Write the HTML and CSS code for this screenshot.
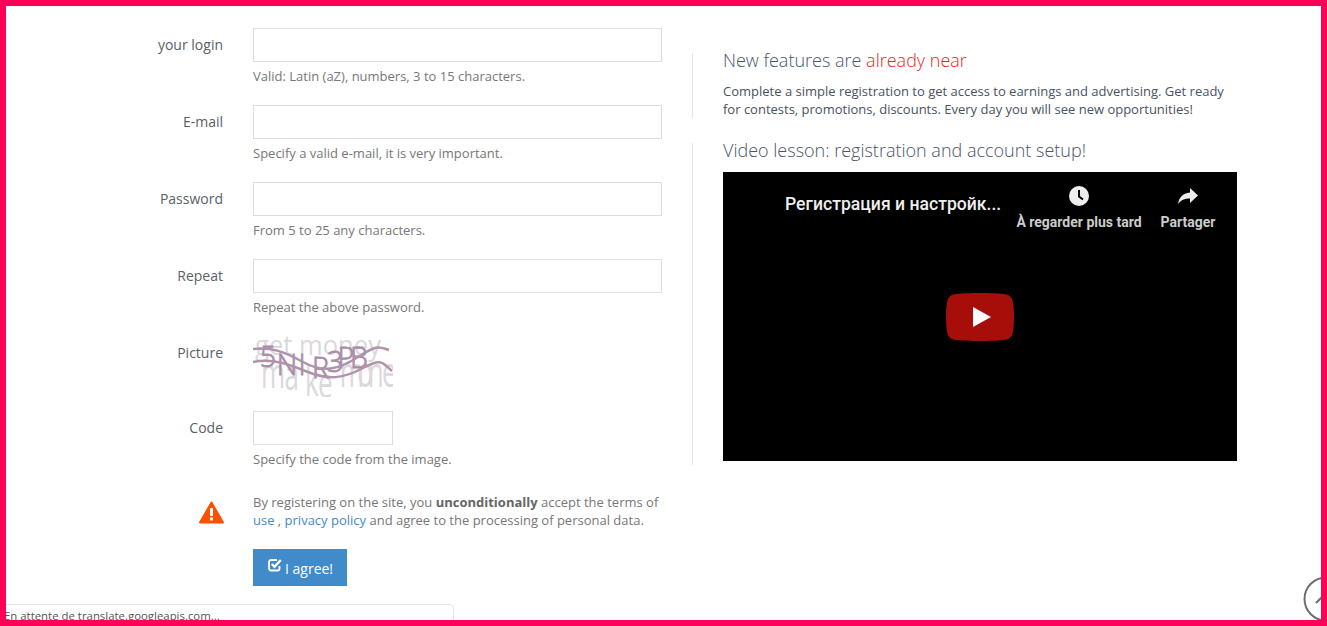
FILE: index.html
```html
<!DOCTYPE html>
<html lang="en">
<head>
<meta charset="utf-8">
<title>Registration</title>
<link rel="stylesheet" href="styles.css">
</head>
<body>
<main class="page">
  <form class="form">
    <div class="row"><label class="label">your login</label><div class="field"><input class="input" type="text"><p class="hint">Valid: Latin (aZ), numbers, 3 to 15 characters.</p></div></div>
    <div class="row"><label class="label">E-mail</label><div class="field"><input class="input" type="text"><p class="hint">Specify a valid e-mail, it is very important.</p></div></div>
    <div class="row"><label class="label">Password</label><div class="field"><input class="input" type="text"><p class="hint">From 5 to 25 any characters.</p></div></div>
    <div class="row"><label class="label">Repeat</label><div class="field"><input class="input" type="text"><p class="hint">Repeat the above password.</p></div></div>
    <div class="row row-captcha"><label class="label">Picture</label><div class="field">
      <svg class="captcha" width="140" height="62" viewBox="0 0 140 62">
        <text class="cap-bg" x="2" y="20" textLength="126" lengthAdjust="spacingAndGlyphs">get money</text>
        <text class="cap-bg cap-big" transform="scale(.62 1)" x="13 51 84 105 120 140 168 185 208" y="53 55 61 63 56 52 52 52 52">make mone</text>
        <text class="cap-fg" transform="scale(.95 1)" x="7 25 48 62 78 89 102" y="32 40 40 43 37 33 33">5NIR3PB</text>
        <path class="cap-line" d="M0 14C18 12 30 16 50 27S85 35 105 22 126 12 136 15"/>
        <path class="cap-line" d="M0 27C20 23 35 29 55 37S90 44 110 33 130 29 139 36"/>
      </svg>
    </div></div>
    <div class="row row-code"><label class="label">Code</label><div class="field"><input class="input input-code" type="text"><p class="hint">Specify the code from the image.</p></div></div>
    <div class="row row-terms">
      <div class="warn"><svg width="25" height="23" viewBox="0 0 25 23"><path d="M12.5 1.5 1 21.5h23z" fill="#ff4f00" stroke="#ff4f00" stroke-width="2" stroke-linejoin="round"/><rect x="11" y="7" width="3" height="8" fill="#fff"/><rect x="11" y="16.500" width="3" height="3" fill="#fff"/></svg></div>
      <div class="field">
        <p class="terms">By registering on the site, you <b>unconditionally</b> accept the terms of <a href="#">use</a> , <a href="#">privacy policy</a> and agree to the processing of personal data.</p>
        <button class="btn" type="button"><svg width="14" height="14" viewBox="0 0 14 14"><path d="M11.500 8v2.500a2 2 0 0 1-2 2H3a2 2 0 0 1-2-2V4a2 2 0 0 1 2-2h6" fill="none" stroke="#fff" stroke-width="1.800"/><path d="M3.800 6 6.500 8.800 12.800 2" fill="none" stroke="#fff" stroke-width="2.400"/></svg> I agree!</button>
      </div>
    </div>
  </form>
  <aside class="side">
    <section class="block block-news">
      <h2 class="title">New features are <span class="accent">already near</span></h2>
      <p class="text">Complete a simple registration to get access to earnings and advertising. Get ready for contests, promotions, discounts. Every day you will see new opportunities!</p>
    </section>
    <section class="block block-video">
      <h2 class="title">Video lesson: registration and account setup!</h2>
      <div class="video">
        <div class="video-top">
          <span class="video-title">Регистрация и настройк...</span>
          <span class="video-action action-later"><svg width="24" height="24" viewBox="0 0 24 24"><circle cx="12" cy="12" r="10" fill="#eee"/><path d="M12 6v6.500l4 3" fill="none" stroke="#000" stroke-width="2"/></svg><span>À regarder plus tard</span></span>
          <span class="video-action action-share"><svg width="24" height="24" viewBox="0 0 24 24"><path d="M14 4l8 7.500-8 7.500v-4.500c-5.500 0-9 1.500-12 5.500 1-6 4.500-11 12-11.500z" fill="#eee"/></svg><span>Partager</span></span>
        </div>
        <svg class="play" width="68" height="48" viewBox="0 0 68 48"><path d="M66.500 7.500a8.500 8.500 0 0 0-6-6C55 0 34 0 34 0S13 0 7.500 1.500a8.500 8.500 0 0 0-6 6C0 13 0 24 0 24s0 11 1.500 16.500a8.500 8.500 0 0 0 6 6C13 48 34 48 34 48s21 0 26.500-1.500a8.500 8.500 0 0 0 6-6C68 35 68 24 68 24s0-11-1.500-16.500z" fill="#a70e0a"/><path d="M27 14v20l18-10z" fill="#fff"/></svg>
      </div>
    </section>
  </aside>
</main>
<div class="status">En attente de translate.googleapis.com...</div>
<div class="to-top"><svg width="46" height="46" viewBox="0 0 46 46"><circle cx="23" cy="23" r="21.500" fill="#fff" stroke="#6e6e6e" stroke-width="2"/><path d="M13 27l10-10 10 10" fill="none" stroke="#6e6e6e" stroke-width="2"/></svg></div>
<div class="frame"></div>
</body>
</html>
```
FILE: styles.css
```css
html, body { margin: 0; height: 100%; overflow: hidden; background: #fff; }
body { font-family: "Open Sans", sans-serif; font-size: 14px; color: #555; }
p, h2 { margin: 0; }
.page { display: flex; align-items: flex-start; padding-top: 28px; }
.form { width: 662px; flex: none; }
.row { display: grid; grid-template-columns: 223px 409px; column-gap: 30px; margin-bottom: 19px; }
.label { text-align: right; line-height: 34px; font-size: 14px; color: #5a5f66; }
.input { display: block; box-sizing: border-box; width: 409px; height: 34px; border: 1px solid #ddd; background: #fff; padding: 0; margin: 0; }
.input-code { width: 140px; }
.hint { margin-top: 5px; font-size: 13px; line-height: 19px; color: #777; }
.row-captcha { margin-bottom: 12px; height: 63px; }
.captcha { display: block; margin-top: -1px; }
.cap-bg { font-family: "Open Sans", sans-serif; font-weight: 400; font-size: 27px; fill: #dcd8dc; }
.cap-big { font-size: 42px; }
.cap-fg { font-family: "Open Sans", sans-serif; font-weight: 300; font-size: 30px; fill: #a98da7; stroke: #a98da7; stroke-width: .8; }
.cap-line { fill: none; stroke: #ae93ac; stroke-width: 2.500; }
.row-code { margin-bottom: 24px; }
.row-terms { margin-bottom: 0; }
.warn { display: flex; justify-content: flex-end; margin-right: -1px; padding-top: 8px; }
.terms { font-size: 13px; line-height: 18px; color: #777; width: 412px; }
.terms b { color: #666; }
.terms a { color: #428bca; text-decoration: none; }
.btn { display: flex; align-items: center; gap: 3px; height: 37px; width: 94px; margin-top: 20px; padding: 2px 0 0 15px; border: 0; background: #428bca; color: #fff; font-family: "Open Sans", sans-serif; font-size: 14px; }
.btn svg { margin-top: -7px; }
.side { width: 514px; margin-left: 30px; padding-top: 25px; flex: none; }
.block { border-left: 1px solid #e4e4e4; padding-left: 30px; width: 514px; }
.block-news { height: 65px; margin-bottom: 25px; }
.block-video { height: 322px; }
.title { font-weight: 300; font-size: 18px; line-height: 14px; color: #4a5568; }
.accent { color: #e8281e; }
.text { margin-top: 15px; font-size: 13px; line-height: 18px; color: #4a5260; }
.video { position: relative; height: 289px; margin-top: 15px; background: #000; font-family: Roboto, sans-serif; overflow: hidden; }
.video-top { display: flex; align-items: flex-start; padding: 12px 22px 0 62px; color: #eee; }
.video-title { width: 232px; font-size: 17.600px; font-weight: 500; line-height: 40px; white-space: nowrap; }
.video-action { display: flex; flex-direction: column; align-items: center; font-size: 14px; font-weight: 700; color: #ccc; white-space: nowrap; }
.video-action span { margin-top: 4px; line-height: 20px; }
.action-later { width: 124px; }
.action-share { width: 54px; margin-left: 20px; }
.play { position: absolute; left: 223px; top: 121px; }
.status { position: fixed; left: 0; bottom: 0; width: 454px; height: 22px; box-sizing: border-box; padding: 3px 0 0 3px; background: #fff; border: 1px solid #e4e4e4; border-radius: 0 4px 0 0; font-size: 11.400px; line-height: 16px; color: #555; }
.to-top { position: fixed; left: 1303px; top: 576px; width: 46px; height: 46px; }
.to-top svg { display: block; }
.frame { position: fixed; inset: 0; border: 6px solid #ff0059; pointer-events: none; }
```
